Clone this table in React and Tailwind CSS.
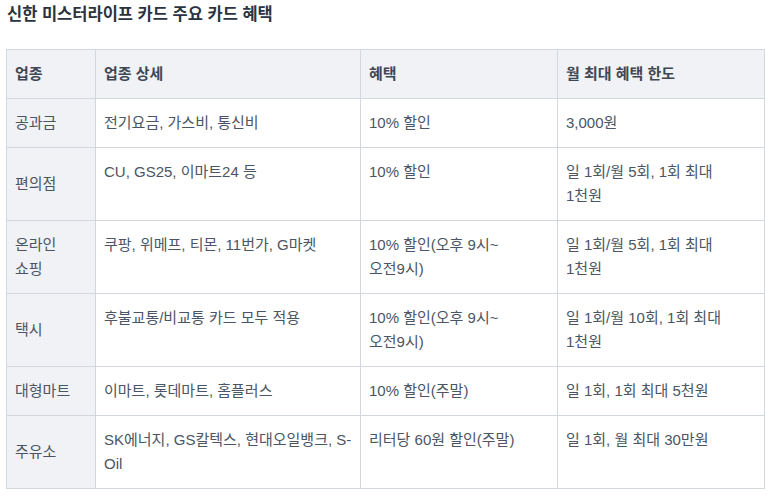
import React from "react";

const rows = [
  ["공과금", "전기요금, 가스비, 통신비", "10% 할인", "3,000원"],
  ["편의점", "CU, GS25, 이마트24 등", "10% 할인", "일 1회/월 5회, 1회 최대 1천원"],
  ["온라인 쇼핑", "쿠팡, 위메프, 티몬, 11번가, G마켓", "10% 할인(오후 9시~ 오전9시)", "일 1회/월 5회, 1회 최대 1천원"],
  ["택시", "후불교통/비교통 카드 모두 적용", "10% 할인(오후 9시~ 오전9시)", "일 1회/월 10회, 1회 최대 1천원"],
  ["대형마트", "이마트, 롯데마트, 홈플러스", "10% 할인(주말)", "일 1회, 1회 최대 5천원"],
  ["주유소", "SK에너지, GS칼텍스, 현대오일뱅크, S-Oil", "리터당 60원 할인(주말)", "일 1회, 월 최대 30만원"],
];

const cell = "border border-[#d3d7de] px-2 py-3";

export default function App() {
  return (
    <div
      className="bg-white min-h-[497px] pl-[6px] pt-[2px]"
      style={{ fontFamily: '"Liberation Sans", "Noto Sans CJK KR", sans-serif' }}
    >
      <h2 className="text-[16.5px] font-bold text-[#2b3340] leading-[24px] pl-[1px]">
        신한 미스터라이프 카드 주요 카드 혜택
      </h2>

      <table className="mt-[23px] w-[758px] table-fixed border-collapse break-keep text-[15px] leading-[24px] text-[#4b5563]">
        <colgroup>
          <col className="w-[89px]" />
          <col className="w-[265px]" />
          <col className="w-[197px]" />
          <col className="w-[207px]" />
        </colgroup>
        <thead>
          <tr className="bg-[#f0f2f5] text-[#3f4754]">
            <th className={`${cell} text-left font-bold`}>업종</th>
            <th className={`${cell} text-left font-bold`}>업종 상세</th>
            <th className={`${cell} text-left font-bold`}>혜택</th>
            <th className={`${cell} text-left font-bold`}>월 최대 혜택 한도</th>
          </tr>
        </thead>
        <tbody>
          {rows.map((r, i) => (
            <tr key={i}>
              <td className={`${cell} bg-[#f0f2f5] align-middle`}>{r[0]}</td>
              <td className={`${cell} align-top`}>{r[1]}</td>
              <td className={`${cell} align-top`}>{r[2]}</td>
              <td className={`${cell} pr-[16px] align-top`}>{r[3]}</td>
            </tr>
          ))}
        </tbody>
      </table>
    </div>
  );
}
